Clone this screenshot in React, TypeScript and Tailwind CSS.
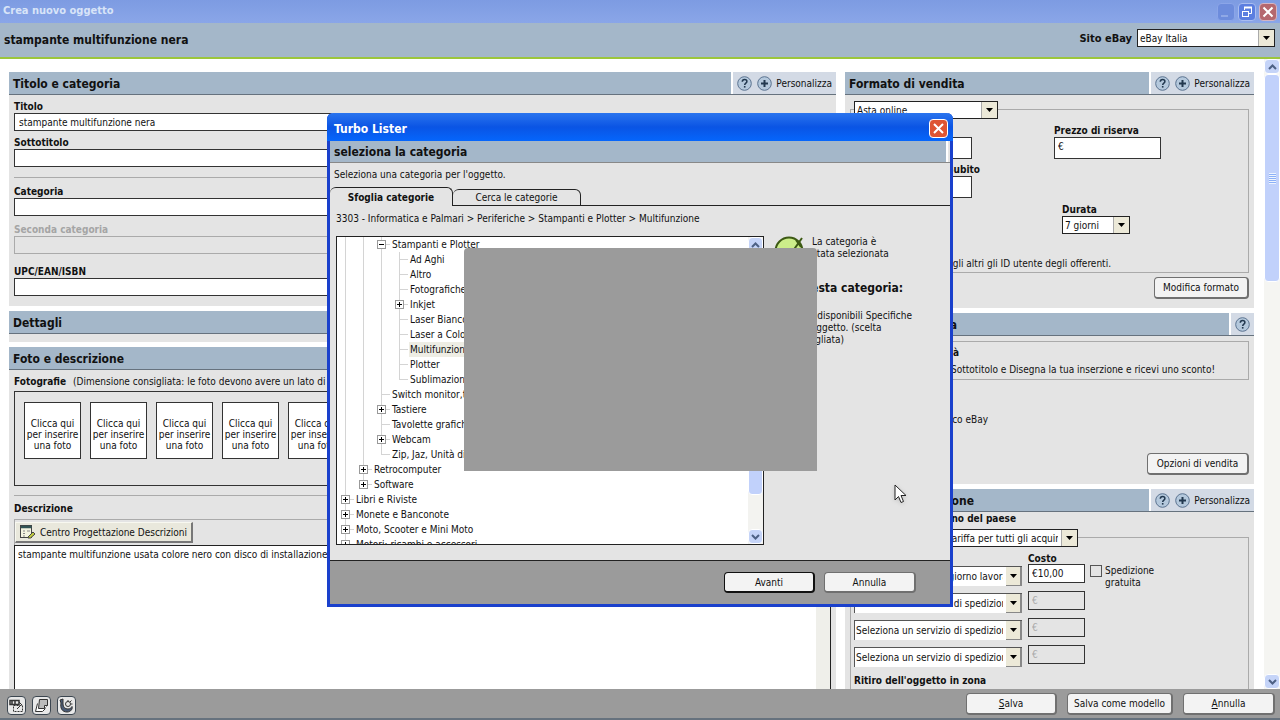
import React from 'react';

const FONT = "font-['DejaVu_Sans_Condensed','DejaVu_Sans',sans-serif]";

type TreeItem = { level: number; label: string; box?: 'plus' | 'minus'; last?: boolean; selected?: boolean };

const tree: TreeItem[] = [
  { level: 2, label: 'Stampanti e Plotter', box: 'minus' },
  { level: 3, label: 'Ad Aghi' },
  { level: 3, label: 'Altro' },
  { level: 3, label: 'Fotografiche' },
  { level: 3, label: 'Inkjet', box: 'plus' },
  { level: 3, label: 'Laser Bianco e Nero' },
  { level: 3, label: 'Laser a Colori' },
  { level: 3, label: 'Multifunzione', selected: true },
  { level: 3, label: 'Plotter' },
  { level: 3, label: 'Sublimazione', last: true },
  { level: 2, label: 'Switch monitor,tastiere' },
  { level: 2, label: 'Tastiere', box: 'plus' },
  { level: 2, label: 'Tavolette grafiche' },
  { level: 2, label: 'Webcam', box: 'plus' },
  { level: 2, label: 'Zip, Jaz, Unità di backup', last: true },
  { level: 1, label: 'Retrocomputer', box: 'plus' },
  { level: 1, label: 'Software', box: 'plus', last: true },
  { level: 0, label: 'Libri e Riviste', box: 'plus' },
  { level: 0, label: 'Monete e Banconote', box: 'plus' },
  { level: 0, label: 'Moto, Scooter e Mini Moto', box: 'plus' },
  { level: 0, label: 'Motori: ricambi e accessori', box: 'plus' },
];

function Chevron({ up }: { up?: boolean }) {
  return (
    <svg width="9" height="6" viewBox="0 0 9 6" fill="none" stroke="#4d6185" strokeWidth="2">
      <path d={up ? 'M1 5l3.5-3.5L8 5' : 'M1 1l3.5 3.5L8 1'} />
    </svg>
  );
}

function ScrollButton({ up, label }: { up?: boolean; label: string }) {
  return (
    <button
      aria-label={label}
      className="flex h-[15px] w-full shrink-0 items-center justify-center rounded-sm border border-white bg-[#c5d4f8]"
    >
      <Chevron up={up} />
    </button>
  );
}

function HelpIcon() {
  return (
    <svg width="15" height="15" viewBox="0 0 15 15">
      <circle cx="7.5" cy="7.5" r="6.8" fill="#b4c8dc" stroke="#5b7390" />
      <path d="M5.3 5.8c0-1.500 1-2.300 2.300-2.300s2.300.8 2.300 2c0 1.600-2.200 1.700-2.200 3.400" fill="none" stroke="#22384f" strokeWidth="1.500" />
      <rect x="6.900" y="10" width="1.600" height="1.600" fill="#22384f" />
    </svg>
  );
}

function PlusIcon() {
  return (
    <svg width="15" height="15" viewBox="0 0 15 15">
      <circle cx="7.5" cy="7.5" r="6.8" fill="#b4c8dc" stroke="#5b7390" />
      <path d="M7.5 4v7M4 7.500h7" stroke="#22384f" strokeWidth="2" />
    </svg>
  );
}

function SectionHeader({ title, customize, help, titleWidth = '' }: { title: string; customize?: boolean; help?: boolean; titleWidth?: string }) {
  return (
    <div className="flex h-[23px] border-b border-[#66727e] bg-[#a4b7c9]">
      <h2 className="flex flex-1 items-center pt-[2px] pl-1 text-[12px] font-bold">
        <span className={`flex justify-end whitespace-nowrap ${titleWidth}`}>{title}</span>
      </h2>
      {(customize || help) && (
        <div className="flex items-center gap-[5px] border-l-2 border-white bg-[#d3dae5] pt-px pr-[4px] pl-[4px]">
          <button aria-label="Aiuto"><HelpIcon /></button>
          {customize && (
            <button className="flex items-center gap-1"><PlusIcon />Personalizza</button>
          )}
        </div>
      )}
    </div>
  );
}

function Select({ options, label, className = '', soft }: { options: string[]; label: string; className?: string; soft?: boolean }) {
  return (
    <div className={`relative flex bg-white ${soft ? 'h-5 border-t border-l border-[#555]' : 'h-[18px] border border-[#222]'} ${className}`}>
      <select aria-label={label} className={`w-full appearance-none overflow-hidden bg-transparent pr-[19px] outline-none ${soft ? 'pl-px' : 'pl-[2px]'}`}>
        {options.map((o) => (
          <option key={o}>{o}</option>
        ))}
      </select>
      <span className={`pointer-events-none absolute inset-y-0 right-0 flex w-4 items-center justify-center bg-[#ece9d8] ${soft ? 'border-r-2 border-b border-[#888]' : 'border-l border-[#aaa]'}`}>
        <svg width="7" height="4" viewBox="0 0 7 4"><path d="M0 0h7L3.500 4z" /></svg>
      </span>
    </div>
  );
}

function Field({ id, label, value = '', disabled, className = '' }: { id: string; label: string; value?: string; disabled?: boolean; className?: string }) {
  return (
    <div className={`flex flex-col ${className}`}>
      <label htmlFor={id} className={`h-[13px] font-bold leading-[13px] ${disabled ? 'text-[#a5a5a5]' : ''}`}>{label}</label>
      <input
        id={id}
        defaultValue={value}
        disabled={disabled}
        className={`h-[18px] border px-1 ${disabled ? 'border-[#aaa] bg-[#e4e4e4]' : 'border-[#333] bg-white'}`}
      />
    </div>
  );
}

function PushButton({ children, className = '' }: { children: React.ReactNode; className?: string }) {
  return (
    <button className={`rounded-sm border border-r-2 border-b-2 bg-[#f3f3f3] text-center whitespace-nowrap ${className}`}>
      {children}
    </button>
  );
}

function TreeRow({ item }: { item: TreeItem }) {
  return (
    <li className="flex h-[15px] items-center leading-[15px] whitespace-nowrap">
      {Array.from({ length: item.level + 1 }, (_, i) => {
        const own = i === item.level;
        return (
          <span key={i} className="relative h-[15px] w-[18px] shrink-0">
            <span className={`absolute top-0 left-[8px] w-px bg-[#d4d4d4] ${own && item.last ? 'h-2' : 'h-full'}`} />
            {own && <span className="absolute top-[7px] left-[8px] h-px w-[9px] bg-[#d4d4d4]" />}
            {own && item.box && (
              <svg className="absolute top-[3px] left-[4px]" width="9" height="9" viewBox="0 0 9 9">
                <rect x=".5" y=".5" width="8" height="8" fill="#fff" stroke="#999" />
                <path d={item.box === 'plus' ? 'M2 4.500h5M4.500 2v5' : 'M2 4.500h5'} stroke="#000" />
              </svg>
            )}
          </span>
        );
      })}
      <span className={`pl-px ${item.selected ? 'bg-[#eeede4]' : ''}`}>{item.label}</span>
    </li>
  );
}

function TitleBar() {
  return (
    <div className="flex h-[23px] shrink-0 items-center justify-between bg-linear-to-b from-[#7d9be2] to-[#8aa6e8] px-[3px]">
      <span className="text-[11px] font-bold text-[#d8e4f8]">Crea nuovo oggetto</span>
      <div className="flex gap-[3px]">
        <button aria-label="Riduci a icona" className="flex h-[18px] w-[18px] items-end rounded-sm border border-[#8ba5e8] bg-[#6d8cdc] p-[3px]">
          <span className="h-[2px] w-[7px] bg-[#8fa8e6]" />
        </button>
        <button aria-label="Ripristina" className="flex h-[18px] w-[18px] items-center justify-center rounded-sm border border-[#a9bdf0] bg-[#5b7ee0]">
          <svg width="12" height="12" viewBox="0 0 12 12" fill="none" stroke="#fff">
            <path d="M3.500 4V1.500h7v6H8" />
            <path d="M3 1.500h8" strokeWidth="2" />
            <rect x="1.500" y="5.500" width="6" height="5" />
          </svg>
        </button>
        <button aria-label="Chiudi" className="flex h-[18px] w-[18px] items-center justify-center rounded-sm border border-[#d3b5c4] bg-[#b5686e]">
          <svg width="12" height="12" viewBox="0 0 12 12" stroke="#fff" strokeWidth="2"><path d="M1.500 1.500l9 9M10.500 1.500l-9 9" /></svg>
        </button>
      </div>
    </div>
  );
}

function LeftColumn() {
  return (
    <div className="flex min-w-0 flex-1 flex-col gap-[5px]">
      <section className="bg-[#e4e4e4]">
        <SectionHeader title="Titolo e categoria" customize help />
        <div className="flex flex-col px-[5px] pt-[5px] pb-[10px]">
          <Field id="titolo" label="Titolo" value="stampante multifunzione nera" />
          <Field id="sottotitolo" label="Sottotitolo" className="mt-[5px]" />
          <hr className="mt-[10px] border-[#aaa]" />
          <Field id="categoria" label="Categoria" className="mt-[7px]" />
          <Field id="seconda" label="Seconda categoria" disabled className="mt-[7px]" />
          <Field id="upc" label="UPC/EAN/ISBN" className="mt-[11px]" />
        </div>
      </section>
      <section className="bg-[#e4e4e4] pb-[8px]">
        <SectionHeader title="Dettagli" />
      </section>
      <section className="bg-[#e4e4e4]">
        <SectionHeader title="Foto e descrizione" />
        <div className="px-[5px] pt-[5px]">
          <p className="h-[16px] leading-[13px] whitespace-nowrap">
            <b className="mr-1">Fotografie</b> (Dimensione consigliata: le foto devono avere un lato di almeno 500 pixel)
          </p>
          <div className="flex h-[95px] gap-[9px] overflow-hidden border border-[#333] px-[9px] pt-[10px]">
            {Array.from({ length: 12 }, (_, i) => (
              <button key={i} className="h-[57px] w-[57px] shrink-0 border border-[#333] bg-white px-px pt-[8px] leading-[11px]">
                Clicca qui per inserire una foto
              </button>
            ))}
          </div>
          <hr className="mt-[9px] border-[#aaa]" />
          <label htmlFor="descrizione" className="mt-[6px] block h-[17px] leading-[13px] font-bold">Descrizione</label>
          <div className="h-[26px] border-t border-l border-[#aaa] pt-[2px]">
            <button className="flex h-[21px] items-center gap-1 border border-r-2 border-b-2 border-[#f8f8f0] border-r-[#777] border-b-[#777] bg-[#e9e8dc] px-1">
              <svg width="16" height="14" viewBox="0 0 16 14">
                <rect x=".5" y=".5" width="11" height="12" fill="#f4f4e0" stroke="#444" />
                <path d="M1 2h10.500" stroke="#355" strokeWidth="2.500" />
                <path d="M3 6h2M3 8.500h2M3 11h2M7 6h3" stroke="#888" />
                <path d="M8 12l5-5 2 2-4.500 4H8z" fill="#c2cc3e" stroke="#444" />
              </svg>
              Centro Progettazione Descrizioni
            </button>
          </div>
          <div className="flex h-[300px] border border-[#222] bg-white">
            <textarea
              id="descrizione"
              className="flex-1 resize-none overflow-hidden px-[3px] pt-[2px] leading-[13px]"
              defaultValue="stampante multifunzione usata colore nero con disco di installazione e cavi"
            />
            <div className="w-[14px] bg-[#efefea]" />
          </div>
        </div>
      </section>
    </div>
  );
}

const shipping = [
  { service: 'Posta prioritaria - (1 giorno lavorativo)', cost: '€10,00' },
  { service: 'Seleziona un servizio di spedizione', cost: '€' },
  { service: 'Seleziona un servizio di spedizione', cost: '€' },
  { service: 'Seleziona un servizio di spedizione', cost: '€' },
];

function RightColumn() {
  return (
    <div className="flex w-[409px] shrink-0 flex-col gap-[5px]">
      <section className="bg-[#e4e4e4] pb-[9px]">
        <SectionHeader title="Formato di vendita" customize help />
        <div className="px-[5px] pt-[14px]">
          <div className="h-[164px] border border-[#aaa] px-[3px]">
            <Select label="Formato" options={['Asta online', 'Compralo Subito']} className="-mt-[9px] w-[144px]" />
            <div className="mt-[5px] flex">
              <div className="w-[200px]">
                <label htmlFor="prezzo" className="block h-[13px] leading-[13px] font-bold">Prezzo di partenza</label>
                <input id="prezzo" className="block h-[22px] w-[118px] border border-[#333] bg-white px-1" />
                <label htmlFor="subito" className="mt-[4px] flex h-[13px] w-[126px] justify-end leading-[13px] font-bold whitespace-nowrap">Prezzo Compralo Subito</label>
                <input id="subito" className="block h-[22px] w-[118px] border border-[#333] bg-white px-1" />
              </div>
              <div>
                <label htmlFor="riserva" className="block h-[13px] leading-[13px] font-bold">Prezzo di riserva</label>
                <input id="riserva" defaultValue="€" className="block h-[22px] w-[107px] border border-[#333] bg-white px-[3px] pb-1" />
                <div className="mt-[44px] ml-[8px]">
                  <span className="block h-[13px] leading-[13px] font-bold">Durata</span>
                  <Select label="Durata" options={['7 giorni', '10 giorni']} className="w-[68px]" />
                </div>
              </div>
            </div>
            <p className="mt-[23px] flex w-[257px] justify-end leading-[13px] whitespace-nowrap">
              Non mostrare agli altri gli ID utente degli offerenti.
            </p>
          </div>
          <div className="mt-[4px] flex justify-end">
            <PushButton className="h-[22px] w-[95px] border-[#707070]">Modifica formato</PushButton>
          </div>
        </div>
      </section>
      <section className="bg-[#e4e4e4] pb-[9px]">
        <SectionHeader title="Opzioni di vendita" help titleWidth="w-[108px]" />
        <div className="px-[5px] pt-[5px]">
          <div className="h-[39px] border border-[#aaa] px-[4px] pt-[4px]">
            <b className="block h-[17px] w-[104px] text-right leading-[13px]">Più visibilità</b>
            <p className="flex w-[360px] justify-end leading-[13px] whitespace-nowrap">Usa Foto, Sottotitolo e Disegna la tua inserzione e ricevi uno sconto!</p>
          </div>
          <p className="mt-[33px] flex w-[138px] justify-end leading-[13px] whitespace-nowrap">Inserzione in elenco eBay</p>
          <div className="mt-[27px] flex justify-end">
            <PushButton className="h-[22px] w-[102px] border-[#707070]">Opzioni di vendita</PushButton>
          </div>
        </div>
      </section>
      <section className="bg-[#e4e4e4] pb-[9px]">
        <SectionHeader title="Opzioni di spedizione" customize help titleWidth="w-[125px]" />
        <div className="px-[5px]">
          <b className="flex h-[25px] w-[166px] justify-end leading-[13px] whitespace-nowrap">Servizi all'interno del paese</b>
          <div className="h-[200px] border border-[#aaa] px-[3px]">
            <Select label="Tariffa" options={['Tariffa fissa - stessa tariffa per tutti gli acquirenti']} className="-mt-[9px] w-[224px]" />
            <div className="flex pt-[5px]">
              <div className="flex w-[168px] flex-col gap-[7px] pt-[14px]">
                {shipping.map((s, i) => (
                  <Select key={i} soft label={`Servizio ${i + 1}`} options={[s.service]} />
                ))}
              </div>
              <div className="ml-[6px] flex w-[57px] flex-col gap-[8px]">
                {shipping.map((s, i) => (
                  <div key={i}>
                    {i === 0 && <label htmlFor="costo0" className="block h-[12px] leading-[13px] font-bold">Costo</label>}
                    <input
                      id={`costo${i}`}
                      aria-label={i > 0 ? `Costo ${i + 1}` : undefined}
                      disabled={i > 0}
                      defaultValue={s.cost}
                      className="block h-[19px] w-full border border-[#333] bg-white px-[3px] disabled:bg-[#e4e4e4] disabled:text-[#aaa]"
                    />
                  </div>
                ))}
              </div>
              <label className="ml-[5px] flex gap-[3px] pt-[13px] leading-[12px]">
                <input type="checkbox" className="h-[12px] w-[12px] shrink-0 appearance-none border border-[#555]" />
                <span>Spedizione<br />gratuita</span>
              </label>
            </div>
            <b className="mt-[7px] block leading-[13px]">Ritiro dell'oggetto in zona</b>
          </div>
        </div>
      </section>
    </div>
  );
}

function CategoryDialog() {
  return (
    <div
      role="dialog"
      aria-label="Turbo Lister"
      className="relative flex h-[494px] w-[626px] flex-col rounded-t-md border-x-[3px] border-b-[3px] border-[#1a40cc] bg-[#e4e4e4]"
    >
      <div className="-mx-[3px] flex h-[28px] shrink-0 items-center justify-between rounded-t-md bg-linear-to-b from-[#2a74ee] via-[#0a54e4] to-[#0566fc] pt-[2px] pr-[5px] pl-[7px]">
        <span className="pt-[2px] text-[12px] font-bold text-white">Turbo Lister</span>
        <button aria-label="Chiudi" className="flex h-[19px] w-[19px] items-center justify-center rounded-sm border border-white bg-[#de5433]">
          <svg width="11" height="11" viewBox="0 0 11 11" stroke="#fff" strokeWidth="2"><path d="M1 1l9 9M10 1l-9 9" /></svg>
        </button>
      </div>
      <div className="flex h-[22px] shrink-0 border-b border-[#888]">
        <h1 className="flex flex-1 items-center border-r-2 border-white bg-[#a4b7c9] pl-[4px] text-[12px] font-bold">seleziona la categoria</h1>
        <span className="w-[2px]" />
      </div>
      <p className="h-[24px] pt-[5px] pl-[4px] leading-[13px]">Seleziona una categoria per l'oggetto.</p>
      <div role="tablist" className="flex h-[19px] shrink-0 items-end">
        <button role="tab" aria-selected className="h-[19px] w-[123px] rounded-t-md border border-b-0 border-l-0 border-[#222] font-bold">Sfoglia categorie</button>
        <button role="tab" className="h-[17px] w-[128px] rounded-t-md border border-l-0 border-[#222]">Cerca le categorie</button>
        <span className="flex-1 border-b border-[#222]" />
      </div>
      <p className="h-[30px] pt-[6px] pl-[6px] leading-[13px]">3303 - Informatica e Palmari &gt; Periferiche &gt; Stampanti e Plotter &gt; Multifunzione</p>
      <div className="flex flex-1 pl-[6px]">
        <div className="flex h-[309px] w-[428px] border border-[#222] bg-white">
          <ul className="flex-1 overflow-hidden">
            {tree.map((item) => (
              <TreeRow key={item.label} item={item} />
            ))}
          </ul>
          <div className="flex w-[15px] flex-col bg-[#f3f3f0]">
            <ScrollButton up label="Su" />
            <div className="mt-[120px] h-[123px] rounded-sm border border-white bg-[#c1d1fb]" />
            <div className="flex-1" />
            <ScrollButton label="Giù" />
          </div>
        </div>
        <div className="pl-[10px]">
          <div className="flex gap-[7px] leading-[12px]">
            <svg width="31" height="31" viewBox="0 0 31 31" fill="none" stroke="#3d5a14">
              <circle cx="15" cy="15" r="13.500" fill="#ccee8a" strokeWidth="2" />
              <path d="M8 15l6 7L28 2M22 4l5 7" strokeWidth="2" />
            </svg>
            <p>La categoria è<br />stata selezionata</p>
          </div>
          <h2 className="mt-[15px] flex w-[129px] justify-end text-[12px] leading-[13px] font-bold whitespace-nowrap">Per questa categoria:</h2>
          <p className="mt-[15px] pl-[18px] leading-[12px] whitespace-nowrap">Sono disponibili Specifiche<br />dell'oggetto. (scelta<br />consigliata)</p>
        </div>
      </div>
      <div className="flex h-[44px] shrink-0 items-start justify-end gap-[9px] border-t border-[#222] bg-[#9b9b9b] pt-[11px] pr-[34px]">
        <PushButton className="h-[21px] w-[91px] border-[#111]">Avanti</PushButton>
        <PushButton className="h-[21px] w-[92px] border-[#707070]">Annulla</PushButton>
      </div>
      <div className="absolute top-[135px] left-[134px] h-[223px] w-[353px] rounded-t-sm bg-[#9b9b9b]" />
      <svg className="absolute top-[371px] left-[564px] drop-shadow-sm" width="13" height="21" viewBox="0 0 13 21">
        <path d="M1 1v15l3.500-3.500L7 18.500l2.500-1L7 11.500h5z" fill="#fff" stroke="#222" />
      </svg>
    </div>
  );
}

function ToolIcon({ label, children }: { label: string; children: React.ReactNode }) {
  return (
    <button aria-label={label} className="flex h-[19px] w-[19px] items-center justify-center rounded-sm border border-[#3c4650] bg-[#e8e8e8]">
      <svg width="15" height="15" viewBox="0 0 15 15" fill="none" stroke="#333">{children}</svg>
    </button>
  );
}

export default function App() {
  return (
    <div className={`relative flex h-screen flex-col overflow-hidden bg-white text-[10px] text-[#111] ${FONT}`}>
      <TitleBar />
      <header className="flex h-[36px] shrink-0 items-center justify-between border-b-2 border-[#9cc63c] bg-[#a4b7c9] pr-[5px] pl-[4px]">
        <span className="text-[12px] font-bold">stampante multifunzione nera</span>
        <div className="flex items-center gap-[5px] pb-[4px]">
          <span className="pt-[3px] text-[11px] font-bold">Sito eBay</span>
          <Select label="Sito eBay" options={['eBay Italia', 'eBay.com']} className="w-[138px]" />
        </div>
      </header>
      <main className="flex min-h-0 flex-1">
        <div className="flex min-w-0 flex-1 gap-[9px] overflow-hidden pt-[13px] pr-[10px] pl-[9px]">
          <LeftColumn />
          <RightColumn />
        </div>
        <div className="flex w-4 shrink-0 flex-col bg-[#f5f5f2]">
          <ScrollButton up label="Scorri su" />
          <div className="flex h-[208px] items-center justify-center rounded-sm border border-white bg-[#c1d1fb]">
            <span className="h-[11px] w-[7px] bg-[repeating-linear-gradient(#eef4fe_0_1px,#8cb0f8_1px_2px)]" />
          </div>
          <div className="flex-1" />
          <ScrollButton label="Scorri giù" />
        </div>
      </main>
      <footer className="flex h-[31px] shrink-0 items-center justify-between border-b-2 border-[#66727e] bg-[#9b9b9b] pr-[5px] pl-[7px]">
        <div className="flex gap-[6px] pt-[4px]">
          <ToolIcon label="Anteprima">
            <path d="M1 2.500h9v4H1zM3 2v4M6 2v4" strokeWidth="1.500" />
            <path d="M10 4l3 3M8 11l3-3" />
            <path d="M4.500 7.500h9v6h-9z" strokeDasharray="2 1" />
          </ToolIcon>
          <ToolIcon label="Duplica">
            <path d="M3.500 5.500l-2 8h7l3-3" fill="#fff" />
            <path d="M5.500 1.500h8v6l-3 3h-6z" fill="#bbb" />
            <path d="M10.500 10.500v-3h3" fill="#fff" />
          </ToolIcon>
          <ToolIcon label="Pianifica">
            <path d="M1 2l3-1v5c0 3 2 5 5 5 2 0 3-1 4-2.500 1 2-1 5.500-5 5.500-5 0-7-4-6-9z" fill="#4a5a74" />
            <circle cx="9" cy="6" r="2.500" />
            <path d="M9 2v1.500M12 6h1.500M11 4l1.500-1.500" />
          </ToolIcon>
        </div>
        <div className="flex gap-[10px] pt-px">
          <PushButton className="h-[22px] w-[91px] border-[#707070]"><u>S</u>alva</PushButton>
          <PushButton className="h-[22px] w-[106px] border-[#707070]">Salva come modello</PushButton>
          <PushButton className="h-[22px] w-[92px] border-[#707070]"><u>A</u>nnulla</PushButton>
        </div>
      </footer>
      <div className="pointer-events-none absolute inset-0 flex items-center justify-center">
        <CategoryDialog />
      </div>
    </div>
  );
}
